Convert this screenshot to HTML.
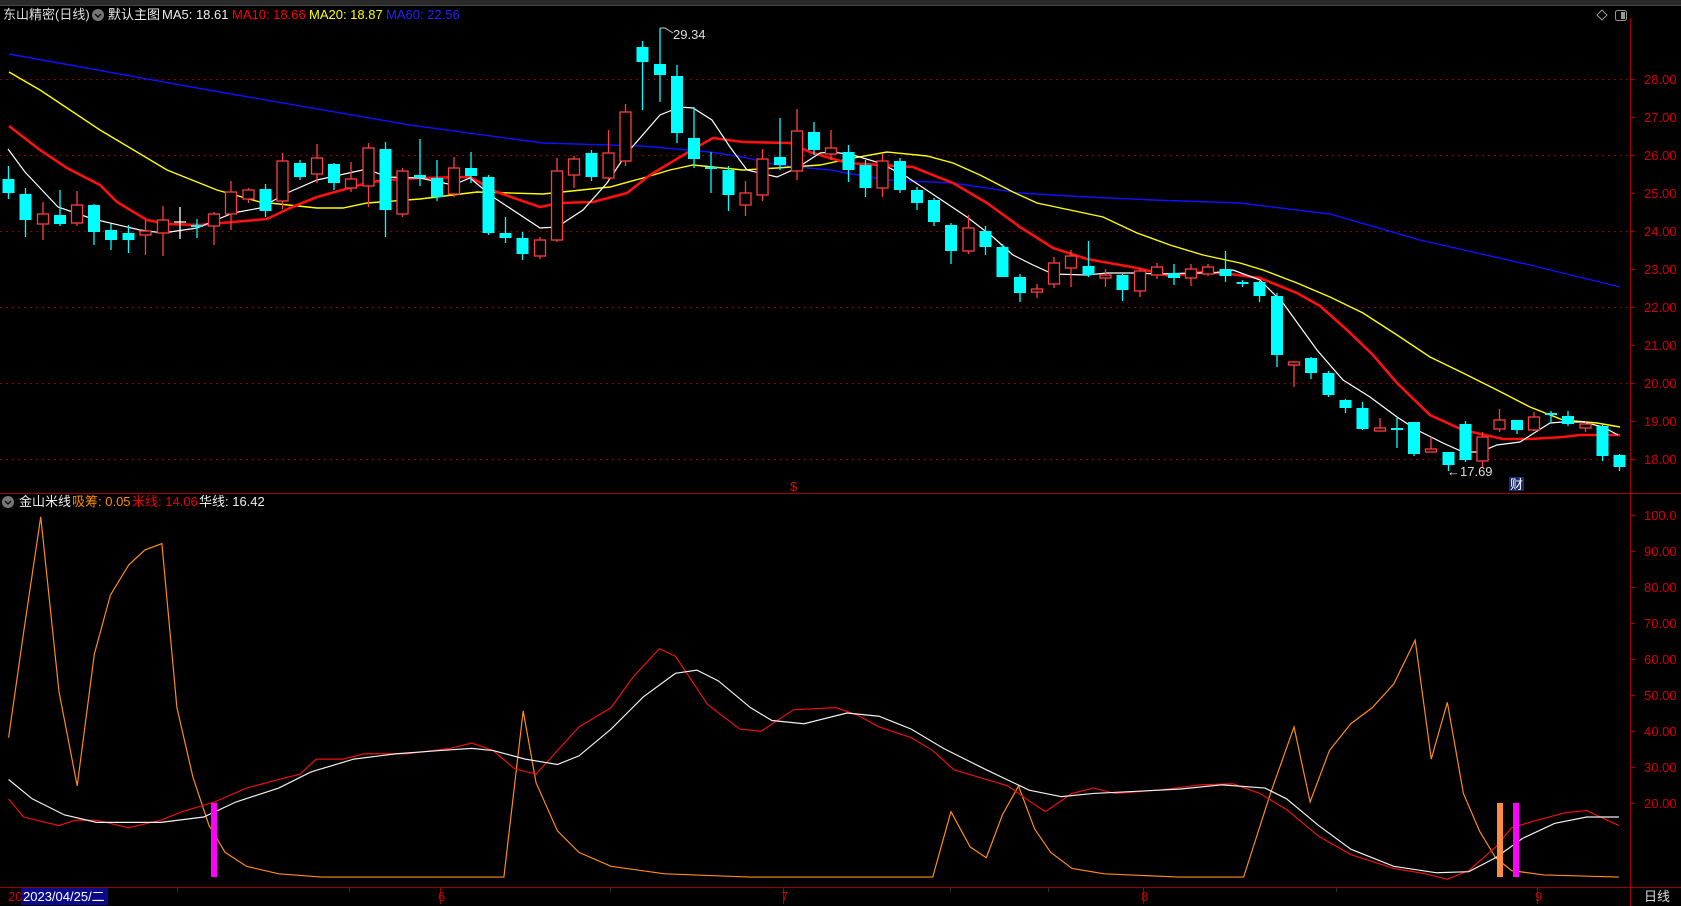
<!DOCTYPE html>
<html><head><meta charset="utf-8"><style>
html,body{margin:0;padding:0;background:#000;width:1681px;height:906px;overflow:hidden}
svg{display:block}
text{font-family:"Liberation Sans","Noto Sans CJK SC",sans-serif;font-size:13px}
</style></head><body>
<svg width="1681" height="906" viewBox="0 0 1681 906" xmlns="http://www.w3.org/2000/svg">
<rect width="1681" height="906" fill="#000"/>
<rect x="0" y="0" width="1681" height="5" fill="#2a2a2a"/>
<path d="M0,5.5H1681" stroke="#444" stroke-width="1"/>
<g stroke="#8a0000" stroke-dasharray="2,4" stroke-width="1">
<path d="M0,79.5H1630M0,155.5H1630M0,231.5H1630M0,307.5H1630M0,383.5H1630M0,459.5H1630"/>
</g>
<path d="M1630.5,18V906M0,493.5H1681M0,887.5H1630M1630,887.5H1681" stroke="#a00000" stroke-width="1"/>
<g stroke="#a00000"><path d="M1630,79.5h5M1630,117.5h5M1630,155.5h5M1630,193.5h5M1630,231.5h5M1630,269.5h5M1630,307.5h5M1630,345.5h5M1630,383.5h5M1630,421.5h5M1630,459.5h5M1630,515.5h5M1630,551.5h5M1630,587.5h5M1630,623.5h5M1630,659.5h5M1630,695.5h5M1630,731.5h5M1630,767.5h5M1630,803.5h5"/></g>
<g fill="#d40000" font-size="12">
<text x="1644" y="84">28.00</text><text x="1644" y="122">27.00</text><text x="1644" y="160">26.00</text><text x="1644" y="198">25.00</text><text x="1644" y="236">24.00</text><text x="1644" y="274">23.00</text><text x="1644" y="312">22.00</text><text x="1644" y="350">21.00</text><text x="1644" y="388">20.00</text><text x="1644" y="426">19.00</text><text x="1644" y="464">18.00</text>
<text x="1644" y="520">100.0</text><text x="1644" y="556">90.00</text><text x="1644" y="592">80.00</text><text x="1644" y="628">70.00</text><text x="1644" y="664">60.00</text><text x="1644" y="700">50.00</text><text x="1644" y="736">40.00</text><text x="1644" y="772">30.00</text><text x="1644" y="808">20.00</text>
</g>
<path d="M1602,10l5,5l-5,5l-5,-5z" fill="none" stroke="#999"/>
<rect x="1615.5" y="10.5" width="11" height="10" rx="2" fill="none" stroke="#999"/><rect x="1621" y="12" width="4" height="7" fill="#999"/>
<text x="3" y="19" fill="#ddd">东山精密(日线)</text>
<circle cx="98" cy="15" r="6" fill="#777"/><path d="M95,14l3,3l3,-3" stroke="#111" stroke-width="1.5" fill="none"/>
<text x="108" y="19" fill="#eee">默认主图</text>
<text x="162" y="19" fill="#eee">MA5: 18.61</text>
<text x="232" y="19" fill="#f00">MA10: 18.66</text>
<text x="309" y="19" fill="#ff0">MA20: 18.87</text>
<text x="386" y="19" fill="#22f">MA60: 22.56</text>
<polyline fill="none" stroke="#1010ff" stroke-width="1.4" points="9,54 214,91 410,125 543,143 643,146 710,152 743,157 777,165 830,170 887,180 953,183 1020,193 1087,197 1153,200 1240,203 1330,214 1420,240 1530,265 1620,287"/>
<polyline fill="none" stroke="#ffff00" stroke-width="1.4" points="9,72 40,90 100,130 167,170 217,190 260,202 317,208 343,208 367,203 420,199 477,192 543,194 610,187 643,178 670,170 693,165 743,170 777,168 820,165 853,158 887,152 927,156 953,163 980,175 1013,192 1037,203 1070,210 1103,217 1137,233 1170,245 1203,255 1240,263 1263,270 1297,283 1330,297 1363,313 1397,335 1430,357 1463,373 1497,390 1530,407 1563,420 1597,423 1620,427"/>
<polyline fill="none" stroke="#ff1010" stroke-width="2.6" points="9,126 40,150 67,168 100,185 117,202 147,220 167,224 200,225 233,222 267,219 290,208 317,197 353,187 370,182 400,179 420,178 470,177 497,192 540,207 560,203 593,202 627,193 650,175 670,163 697,147 713,138 743,142 790,143 810,152 830,158 847,163 913,167 953,183 987,203 1020,227 1053,248 1087,259 1137,268 1170,276 1203,272 1230,274 1260,278 1297,293 1320,306 1347,330 1373,355 1397,383 1430,415 1463,430 1503,439 1530,439 1563,437 1580,435 1620,435"/>
<polyline fill="none" stroke="#fff" stroke-width="1.2" points="8,149 25,172 58,207 93,219 140,230 163,233 197,228 233,213 260,208 287,193 317,180 367,169 387,177 420,178 453,185 470,178 493,197 540,228 557,227 583,210 607,183 627,153 660,115 680,107 693,108 712,120 730,147 747,170 777,177 797,168 820,153 833,152 853,155 880,163 907,177 937,197 967,217 993,237 1013,255 1033,265 1053,274 1087,275 1107,273 1133,273 1160,274 1193,273 1213,273 1233,270 1260,280 1283,303 1317,350 1343,380 1370,397 1397,417 1417,430 1443,443 1463,452 1480,452 1497,445 1520,442 1550,423 1563,422 1583,422 1603,427 1618,435"/>
<path stroke="#00ffff" stroke-width="1.3" fill="none" d="M8.5,166V199M25.5,188V237M60,190V226M94,204V245M111,224V250M128.5,225V253M197,219V238M265.5,184V217M300,160V180M334,163V190M385.5,142V237M420,139V186M437,160V201M471,152V183M488.5,175V235M505.5,217V243M522.5,232V260M591.5,150V181M642.5,41V110M660,28V102M677,65V143M694,107V168M711,152V193M728.5,166V211M780,118V170M814,122V155M848.5,145V182M865.5,160V197M900,158V193M917,187V210M934,198V226M951,223V264M985.5,226V255M1002.5,244V277M1020,274V302M1088.5,241V277M1122.5,274V301M1174,264V285M1225.5,251V282M1242.5,280V287M1259.5,281V302M1277,293V367M1311,357V379M1328.5,371V397M1345.5,399V413M1362.5,402V430M1397,418V448M1414,422V456M1448.5,452V471M1465.5,421V462M1517,420V434M1551,411V423M1568,411V426M1602.5,425V461M1619.5,454V471"/>
<path stroke="#ff3d3d" stroke-width="1.3" fill="none" d="M43,202V240M77,191V226M145.5,220V255M163,206V256M214,212V245M231,181V230M248.5,188V203M282.5,153V209M317,144V183M351,162V192M368.5,143V207M402.5,168V217M454,157V197M540,237V259M557,158V242M574,156V188M608.5,130V180M625.5,104V166M745.5,181V216M762.5,149V201M797,109V180M831,130V160M882.5,154V197M968.5,215V254M1037,284V298M1054,257V288M1071,250V287M1105.5,269V287M1140,268V297M1157,263V279M1191,264V286M1208,264V276M1294,361V387M1380,418V431M1431,437V452M1482.5,432V468M1499.5,409V432M1534,412V431M1585.5,422V432"/>
<path stroke="#fff" stroke-width="1.3" d="M180,207V239M174,222h12"/>
<g fill="#00ffff">
<rect x="2.5" y="179" width="12" height="14"/><rect x="19.5" y="194" width="12" height="26"/><rect x="54" y="215" width="12" height="9"/><rect x="88" y="205" width="12" height="27"/><rect x="105" y="230" width="12" height="10"/><rect x="122.5" y="233" width="12" height="7"/><rect x="191" y="225" width="12" height="2"/><rect x="259.5" y="189" width="12" height="22"/><rect x="294" y="163" width="12" height="14"/><rect x="328" y="164" width="12" height="19"/><rect x="379.5" y="149" width="12" height="61"/><rect x="414" y="175" width="12" height="3"/><rect x="431" y="178" width="12" height="19"/><rect x="465" y="168" width="12" height="8"/><rect x="482.5" y="177" width="12" height="56"/><rect x="499.5" y="233" width="12" height="5"/><rect x="516.5" y="238" width="12" height="16"/><rect x="585.5" y="153" width="12" height="24"/><rect x="636.5" y="47" width="12" height="15"/><rect x="654" y="64" width="12" height="11"/><rect x="671" y="76" width="12" height="57"/><rect x="688" y="138" width="12" height="21"/><rect x="705" y="167" width="12" height="2"/><rect x="722.5" y="170" width="12" height="25"/><rect x="774" y="157" width="12" height="8"/><rect x="808" y="132" width="12" height="18"/><rect x="842.5" y="152" width="12" height="18"/><rect x="859.5" y="165" width="12" height="23"/><rect x="894" y="161" width="12" height="29"/><rect x="911" y="190" width="12" height="13"/><rect x="928" y="200" width="12" height="22"/><rect x="945" y="225" width="12" height="26"/><rect x="979.5" y="231" width="12" height="16"/><rect x="996.5" y="247" width="12" height="30"/><rect x="1014" y="277" width="12" height="16"/><rect x="1082.5" y="266" width="12" height="9"/><rect x="1116.5" y="275" width="12" height="15"/><rect x="1168" y="273" width="12" height="5"/><rect x="1219.5" y="269" width="12" height="7"/><rect x="1236.5" y="282" width="12" height="2"/><rect x="1253.5" y="282" width="12" height="14"/><rect x="1271" y="296" width="12" height="59"/><rect x="1305" y="358" width="12" height="15"/><rect x="1322.5" y="373" width="12" height="22"/><rect x="1339.5" y="400" width="12" height="8"/><rect x="1356.5" y="408" width="12" height="21"/><rect x="1391" y="428" width="12" height="2"/><rect x="1408" y="422" width="12" height="32"/><rect x="1442.5" y="452" width="12" height="13"/><rect x="1459.5" y="424" width="12" height="36"/><rect x="1511" y="420" width="12" height="10"/><rect x="1545" y="413" width="12" height="2"/><rect x="1562" y="416" width="12" height="8"/><rect x="1596.5" y="426" width="12" height="30"/><rect x="1613.5" y="455" width="12" height="12"/>
</g>
<g fill="#000" stroke="#ff3d3d" stroke-width="1.3">
<rect x="37.5" y="214" width="11" height="10"/><rect x="71.5" y="205" width="11" height="18"/><rect x="140" y="231" width="11" height="4"/><rect x="157.5" y="220" width="11" height="13"/><rect x="208.5" y="214" width="11" height="12"/><rect x="225.5" y="192" width="11" height="22"/><rect x="243" y="190" width="11" height="9"/><rect x="277" y="161" width="11" height="40"/><rect x="311.5" y="158" width="11" height="16"/><rect x="345.5" y="179" width="11" height="9"/><rect x="363" y="148" width="11" height="38"/><rect x="397" y="171" width="11" height="43"/><rect x="448.5" y="168" width="11" height="26"/><rect x="534.5" y="240" width="11" height="16"/><rect x="551.5" y="171" width="11" height="69"/><rect x="568.5" y="159" width="11" height="16"/><rect x="603" y="153" width="11" height="25"/><rect x="620" y="112" width="11" height="49"/><rect x="740" y="193" width="11" height="12"/><rect x="757" y="159" width="11" height="36"/><rect x="791.5" y="131" width="11" height="40"/><rect x="825.5" y="148" width="11" height="6"/><rect x="877" y="161" width="11" height="27"/><rect x="963" y="228" width="11" height="23"/><rect x="1031.5" y="289" width="11" height="3"/><rect x="1048.5" y="263" width="11" height="21"/><rect x="1065.5" y="256" width="11" height="12"/><rect x="1100" y="275" width="11" height="3"/><rect x="1134.5" y="271" width="11" height="20"/><rect x="1151.5" y="267" width="11" height="8"/><rect x="1185.5" y="269" width="11" height="9"/><rect x="1202.5" y="267" width="11" height="7"/><rect x="1288.5" y="362" width="11" height="3"/><rect x="1374.5" y="428" width="11" height="3"/><rect x="1425.5" y="449" width="11" height="3"/><rect x="1477" y="437" width="11" height="24"/><rect x="1494" y="420" width="11" height="9"/><rect x="1528.5" y="417" width="11" height="13"/><rect x="1580" y="424" width="11" height="4"/>
</g>
<path d="M660,28h5l8,5" stroke="#ccc" fill="none"/><text x="673" y="39" fill="#ddd" font-size="12">29.34</text>
<text x="1447" y="476" fill="#ddd" font-size="12">←17.69</text>
<text x="790" y="491" fill="#e00" font-size="11">$</text>
<rect x="1509" y="477" width="15" height="14" fill="#1a2a6a"/><text x="1510" y="489" fill="#fff" font-size="12">财</text>
<circle cx="8" cy="502" r="6" fill="#777"/><path d="M5,501l3,3l3,-3" stroke="#111" stroke-width="1.5" fill="none"/>
<text x="19" y="506" fill="#eee">金山米线</text>
<text x="72" y="506" fill="#ff8c00">吸筹: 0.05</text>
<text x="132" y="506" fill="#e00">米线: 14.06</text>
<text x="199" y="506" fill="#eee">华线: 16.42</text>
<g transform="scale(1.0721,1.0722)" fill="none">
<polyline stroke="#ff8c1a" stroke-width="1.1" points="8,688 22,590 38,482 55,645 72,733 88,610 103,555 120,527 135,513 151,507 165,660 180,725 195,770 210,795 230,808 260,815 300,818 350,818 470,818 488,663 500,730 520,775 540,795 570,808 620,815 700,818 870,818 887,757 905,790 920,800 935,760 950,733 965,773 980,795 1000,810 1030,815 1100,818 1160,818 1185,740 1207,678 1222,748 1240,700 1260,675 1280,660 1300,638 1320,597 1335,708 1350,655 1365,740 1380,775 1395,800 1410,812 1440,816 1510,818"/>
<polyline stroke="#ee1010" stroke-width="1.1" points="8,745 22,762 55,770 70,765 90,765 120,772 150,765 170,757 200,748 230,735 260,727 280,722 295,708 320,708 340,703 380,703 420,698 440,693 460,700 480,717 500,722 520,700 540,678 570,660 590,632 615,605 630,612 660,657 690,680 710,682 740,662 780,660 800,667 820,678 850,688 870,700 890,718 920,727 940,733 960,747 975,757 1000,740 1020,735 1040,740 1080,737 1120,732 1150,731 1175,740 1200,755 1230,780 1260,797 1300,810 1330,815 1350,820 1370,812 1395,790 1410,772 1430,766 1460,758 1480,756 1510,770"/>
<polyline stroke="#f0f0f0" stroke-width="1.1" points="8,727 30,745 60,760 90,767 150,767 190,762 220,748 260,735 290,720 330,708 370,703 410,700 440,698 460,700 490,708 520,713 540,705 570,680 600,650 630,628 650,625 670,635 700,660 720,672 750,675 790,665 820,668 850,680 880,698 920,718 960,737 990,743 1020,740 1060,738 1100,736 1140,732 1180,735 1200,745 1230,770 1260,792 1300,808 1340,814 1370,813 1395,800 1420,782 1450,768 1480,762 1510,762"/>
</g>
<rect x="211" y="803" width="6" height="74" fill="#ff00ff"/>
<rect x="1497" y="803" width="6" height="74" fill="#ff8c40"/>
<rect x="1513" y="803" width="6" height="74" fill="#ff00ff"/>
<g stroke="#a00000"><path d="M440.5,888v16M783.5,888v16M1143.5,888v16M1537.5,888v16"/></g>
<g stroke="#333"><path d="M177.5,888v4M349.5,888v4M610.5,888v4M950.5,888v4M1048.5,888v4M1336.5,888v4"/></g>
<text x="8" y="901" fill="#c00" font-size="12">20</text>
<rect x="21" y="888" width="87" height="17" fill="#0a0a8a"/>
<text x="23" y="901" fill="#fff" font-size="12">2023/04/25/二</text>
<text x="438" y="901" fill="#c00" font-size="12">6</text>
<text x="781" y="901" fill="#c00" font-size="12">7</text>
<text x="1141" y="901" fill="#c00" font-size="12">8</text>
<text x="1535" y="901" fill="#c00" font-size="12">9</text>
<text x="1644" y="901" fill="#ddd" font-size="13">日线</text>
</svg>
</body></html>
